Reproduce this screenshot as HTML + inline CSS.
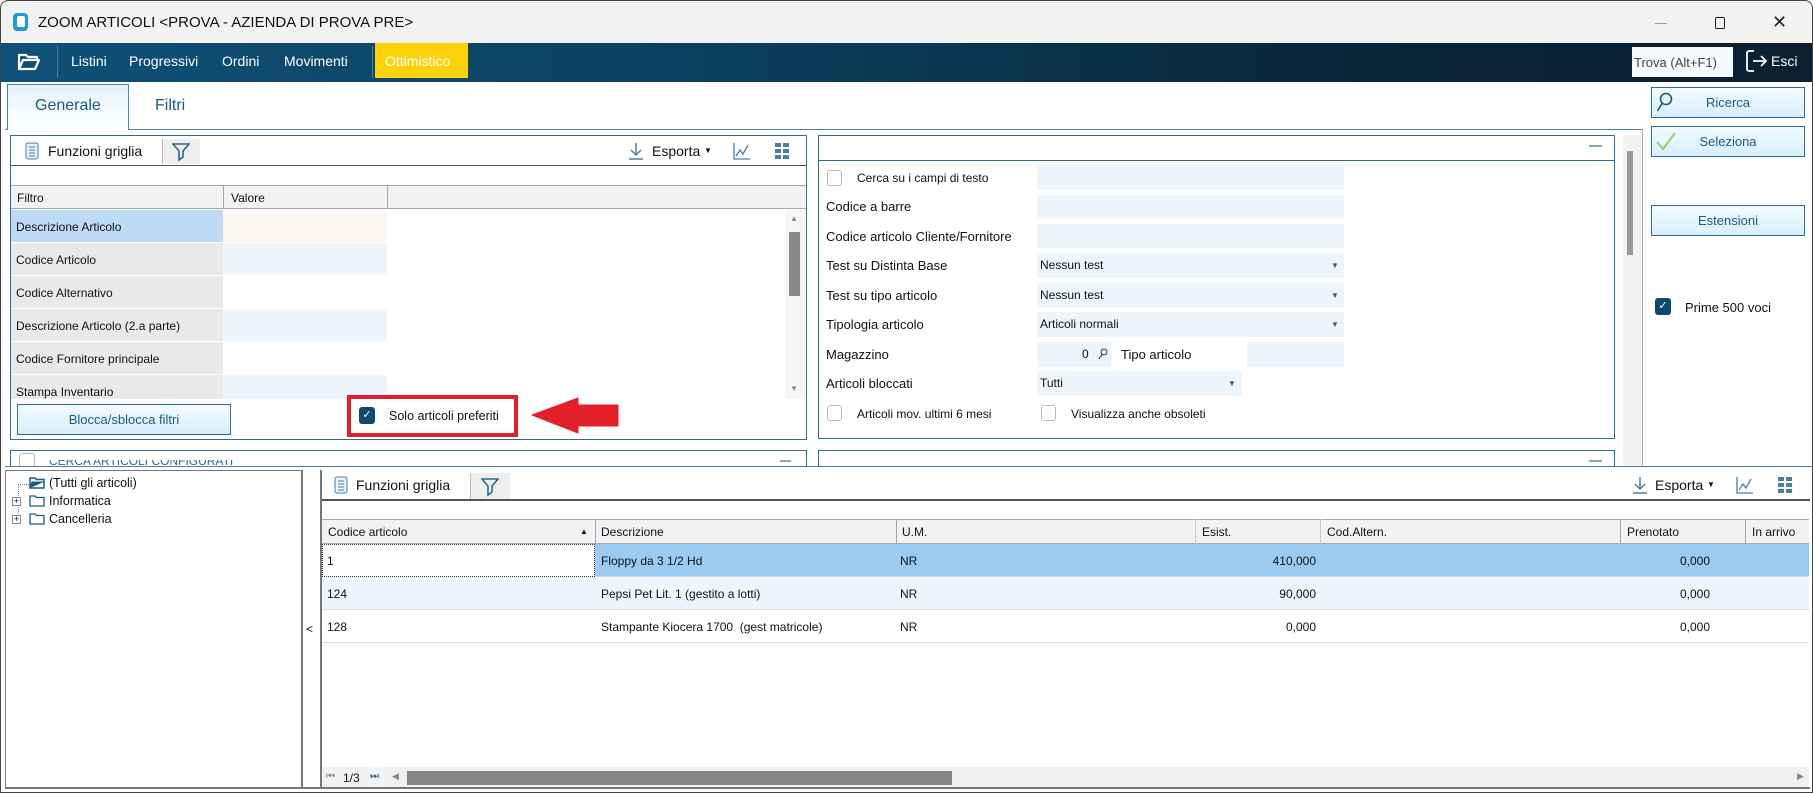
<!DOCTYPE html>
<html><head><meta charset="utf-8"><style>
*{box-sizing:border-box;margin:0;padding:0}
body{width:1813px;height:793px;background:#fff;font-family:"Liberation Sans",sans-serif;font-size:12px;color:#111;position:relative;overflow:hidden}
.a{position:absolute}
.t{position:absolute;white-space:nowrap}
.inp{position:absolute;background:#eef6fd}
.cb{position:absolute;width:15px;height:16px;border:1px solid #bbb;border-radius:3px;background:#fff}
.cbc{position:absolute;width:16px;height:17px;background:#0f4a6e;border-radius:3px;color:#fff;font-size:11px;text-align:center;line-height:17px}
.btn{position:absolute;border:1px solid #2a6a8c;background:linear-gradient(#f4fbff,#d7effc);color:#1a5a85;font-size:13px;text-align:center}
.dd{position:absolute;font-size:8px;color:#555}
.lb{position:absolute;white-space:nowrap;font-size:13px;left:826px}
</style></head><body>
<div class="a" style="left:0;top:0;width:1813px;height:793px;border:1px solid #444;border-radius:8px 8px 0 0"></div>
<div class="a" style="left:1px;top:1px;width:1811px;height:42px;background:#f3f3f3;border-radius:8px 8px 0 0"></div>
<div class="a" style="left:13px;top:13px;width:15px;height:18px;background:#1e9be0;border-radius:4px"></div>
<div class="a" style="left:17px;top:16px;width:8px;height:11px;background:#fff;border-radius:2px"></div>
<div class="t" style="left:38px;top:14px;font-size:15px;color:#111">ZOOM ARTICOLI &lt;PROVA - AZIENDA DI PROVA PRE&gt;</div>
<div class="a" style="left:1655px;top:23px;width:12px;height:1px;background:#999"></div>
<div class="a" style="left:1715px;top:17px;width:10px;height:12px;border:1.5px solid #222;border-radius:2px"></div>
<div class="t" style="left:1772px;top:12px;font-size:18px;color:#222">✕</div>
<div class="a" style="left:1px;top:43px;width:1811px;height:39px;background:linear-gradient(90deg,#0e5178 0%,#0b3f5e 40%,#0a2538 75%,#0b1f30 100%)"></div>
<svg class="a" style="left:17px;top:52px" width="24" height="20" viewBox="0 0 24 20"><path d="M2 3h7l2 2h9v3H6L2 17z M2 17l4-9h16l-4 9z" fill="none" stroke="#fff" stroke-width="2.2" stroke-linejoin="round"/></svg>
<div class="a" style="left:57px;top:46px;width:1px;height:32px;background:#5a7d95"></div>
<div class="t" style="left:71px;top:53px;font-size:14px;color:#fff">Listini</div>
<div class="t" style="left:129px;top:53px;font-size:14px;color:#fff">Progressivi</div>
<div class="t" style="left:222px;top:53px;font-size:14px;color:#fff">Ordini</div>
<div class="t" style="left:284px;top:53px;font-size:14px;color:#fff">Movimenti</div>
<div class="a" style="left:372px;top:46px;width:1px;height:32px;background:#5a7d95"></div>
<div class="a" style="left:375px;top:43px;width:93px;height:35px;background:#fdd20a"></div>
<div class="t" style="left:385px;top:53px;font-size:14px;color:#fff">Ottimistico</div>
<div class="a" style="left:1632px;top:47px;width:101px;height:30px;background:#f3f9fd"></div>
<div class="t" style="left:1634px;top:55px;font-size:13px;color:#444">Trova (Alt+F1)</div>
<svg class="a" style="left:1745px;top:48px" width="24" height="26" viewBox="0 0 24 26"><path d="M9 3H4a2 2 0 0 0-2 2v16a2 2 0 0 0 2 2h5" fill="none" stroke="#fff" stroke-width="1.8"/><path d="M8 13h13M16 8l5 5-5 5" fill="none" stroke="#fff" stroke-width="1.8"/></svg>
<div class="t" style="left:1771px;top:53px;font-size:14px;color:#fff">Esci</div>
<div class="a" style="left:5px;top:129px;width:1637px;height:1px;background:#567f99"></div>
<div class="a" style="left:1642px;top:129px;width:1px;height:337px;background:#aaa"></div>
<div class="a" style="left:7px;top:84px;width:122px;height:46px;border:1px solid #4a86ad;border-bottom:none;background:linear-gradient(#e4f2fc,#fff)"></div>
<div class="t" style="left:35px;top:97px;font-size:16px;color:#1a5a85">Generale</div>
<div class="t" style="left:155px;top:97px;font-size:16px;color:#1a5a85">Filtri</div>
<div class="a" style="left:10px;top:135px;width:797px;height:305px;border:1px solid #2d6b8f"></div>
<div class="a" style="left:11px;top:165px;width:795px;height:1px;background:#555"></div>
<svg class="a" style="left:25px;top:142px" width="14" height="18" viewBox="0 0 14 18"><rect x="1" y="1" width="12" height="16" rx="2" fill="#e8f2fa" stroke="#4a7fa5"/><path d="M4 5h6M4 8h6M4 11h6M4 14h6" stroke="#4a7fa5"/></svg>
<div class="t" style="left:48px;top:143px;font-size:14px">Funzioni griglia</div>
<div class="a" style="left:162px;top:139px;width:38px;height:25px;background:#eee;border-left:1px solid #bbb"></div>
<svg class="a" style="left:172px;top:142px" width="18" height="20" viewBox="0 0 18 20"><path d="M1 2h16l-6 7v6l-4 3V9z" fill="none" stroke="#2a6a8c" stroke-width="1.6"/></svg>
<svg class="a" style="left:628px;top:142px" width="16" height="18" viewBox="0 0 16 18"><path d="M8 1v12M3 8l5 5 5-5M1 17h14" fill="none" stroke="#4a7fa5" stroke-width="1.5"/></svg>
<div class="t" style="left:652px;top:143px;font-size:14px">Esporta</div>
<div class="t" style="left:704px;top:146px;font-size:8px">▼</div>
<svg class="a" style="left:733px;top:142px" width="18" height="18" viewBox="0 0 18 18"><path d="M1 1v16h16M3 14l4-6 3 4 5-9" fill="none" stroke="#4a7fa5" stroke-width="1.3"/></svg>
<svg class="a" style="left:775px;top:143px" width="14" height="16" viewBox="0 0 14 16"><g fill="#4a7fa5"><rect x="0" y="0" width="6" height="4"/><rect x="8" y="0" width="6" height="4"/><rect x="0" y="6" width="6" height="4"/><rect x="8" y="6" width="6" height="4"/><rect x="0" y="12" width="6" height="4"/><rect x="8" y="12" width="6" height="4"/></g></svg>
<div class="a" style="left:11px;top:185px;width:795px;height:24px;background:#f2f2f2;border-top:1px solid #9ab;border-bottom:1px solid #9ab"></div>
<div class="a" style="left:223px;top:185px;width:1px;height:24px;background:#9ab"></div>
<div class="a" style="left:387px;top:185px;width:1px;height:24px;background:#9ab"></div>
<div class="t" style="left:17px;top:191px">Filtro</div>
<div class="t" style="left:231px;top:191px">Valore</div>
<div class="a" style="left:11px;top:210px;width:212px;height:32px;background:#c0dbf5"></div>
<div class="a" style="left:223px;top:210px;width:164px;height:32px;background:#fcf8ef"></div>
<div class="a" style="left:11px;top:243px;width:212px;height:32px;background:#e9e9e9"></div>
<div class="a" style="left:223px;top:243px;width:164px;height:32px;background:#eef6fd"></div>
<div class="a" style="left:11px;top:276px;width:212px;height:32px;background:#e9e9e9"></div>
<div class="a" style="left:11px;top:309px;width:212px;height:32px;background:#e9e9e9"></div>
<div class="a" style="left:223px;top:309px;width:164px;height:32px;background:#eef6fd"></div>
<div class="a" style="left:11px;top:342px;width:212px;height:32px;background:#e9e9e9"></div>
<div class="a" style="left:11px;top:375px;width:212px;height:24px;background:#e9e9e9"></div>
<div class="a" style="left:223px;top:375px;width:164px;height:24px;background:#eef6fd"></div>
<div class="t" style="left:16px;top:220px">Descrizione Articolo</div>
<div class="t" style="left:16px;top:253px">Codice Articolo</div>
<div class="t" style="left:16px;top:286px">Codice Alternativo</div>
<div class="t" style="left:16px;top:319px">Descrizione Articolo (2.a parte)</div>
<div class="t" style="left:16px;top:352px">Codice Fornitore principale</div>
<div class="t" style="left:16px;top:385px">Stampa Inventario</div>
<div class="a" style="left:785px;top:210px;width:20px;height:189px;background:#f6f6f6"></div>
<div class="t" style="left:790px;top:214px;font-size:8px;color:#888">▲</div>
<div class="a" style="left:789px;top:232px;width:11px;height:64px;background:#888"></div>
<div class="t" style="left:790px;top:384px;font-size:8px;color:#888">▼</div>
<div class="btn" style="left:17px;top:404px;width:214px;height:31px;line-height:29px">Blocca/sblocca filtri</div>
<div class="a" style="left:347px;top:395px;width:171px;height:42px;border:4px solid #e3202a"></div>
<div class="cbc" style="left:359px;top:407px">✓</div>
<div class="t" style="left:389px;top:409px;font-size:12.5px">Solo articoli preferiti</div>
<svg class="a" style="left:530px;top:395px" width="90" height="40" viewBox="0 0 90 40"><path d="M2 20L48 3V10H88V31H48V38Z" fill="#e3202a" stroke="#e3202a" stroke-linejoin="round"/></svg>
<div class="a" style="left:10px;top:450px;width:797px;height:16px;border:1px solid #2d6b8f;border-bottom:none"></div>
<div class="a" style="left:19px;top:453px;width:16px;height:13px;border:1px solid #bbb;border-bottom:none;border-radius:3px 3px 0 0"></div>
<div class="a" style="left:11px;top:460px;width:795px;height:6px;overflow:hidden"><div class="t" style="left:38px;top:-6px;color:#2a6a8c;font-size:12px">CERCA ARTICOLI CONFIGURATI</div></div>
<div class="a" style="left:780px;top:460px;width:11px;height:2px;background:#8aa"></div>
<div class="a" style="left:818px;top:135px;width:797px;height:304px;border:1px solid #2d6b8f"></div>
<div class="a" style="left:819px;top:160px;width:795px;height:1px;background:#2d6b8f"></div>
<div class="a" style="left:1589px;top:145px;width:13px;height:2px;background:#8aa"></div>
<div class="cb" style="left:827px;top:170px"></div>
<div class="t" style="left:857px;top:171px">Cerca su i campi di testo</div>
<div class="inp" style="left:1037px;top:165px;width:307px;height:25px"></div>
<div class="lb" style="top:199px">Codice a barre</div>
<div class="inp" style="left:1037px;top:195px;width:307px;height:24px"></div>
<div class="lb" style="top:229px">Codice articolo Cliente/Fornitore</div>
<div class="inp" style="left:1037px;top:224px;width:307px;height:24px"></div>
<div class="lb" style="top:258px">Test su Distinta Base</div>
<div class="inp" style="left:1037px;top:253px;width:307px;height:25px"></div>
<div class="t" style="left:1040px;top:258px">Nessun test</div><div class="dd" style="left:1331px;top:261px">▼</div>
<div class="lb" style="top:288px">Test su tipo articolo</div>
<div class="inp" style="left:1037px;top:283px;width:307px;height:25px"></div>
<div class="t" style="left:1040px;top:288px">Nessun test</div><div class="dd" style="left:1331px;top:291px">▼</div>
<div class="lb" style="top:317px">Tipologia articolo</div>
<div class="inp" style="left:1037px;top:312px;width:307px;height:25px"></div>
<div class="t" style="left:1040px;top:317px">Articoli normali</div><div class="dd" style="left:1331px;top:320px">▼</div>
<div class="lb" style="top:347px">Magazzino</div>
<div class="inp" style="left:1037px;top:342px;width:74px;height:25px"></div>
<div class="t" style="left:1082px;top:347px">0</div>
<svg class="a" style="left:1098px;top:348px" width="10" height="12" viewBox="0 0 10 12"><circle cx="6" cy="4" r="3" fill="none" stroke="#333"/><path d="M4 6.5L1 11" stroke="#333"/></svg>
<div class="t" style="left:1121px;top:347px;font-size:13px">Tipo articolo</div>
<div class="inp" style="left:1247px;top:342px;width:97px;height:25px"></div>
<div class="lb" style="top:376px">Articoli bloccati</div>
<div class="inp" style="left:1037px;top:371px;width:205px;height:25px"></div>
<div class="t" style="left:1040px;top:376px">Tutti</div><div class="dd" style="left:1228px;top:379px">▼</div>
<div class="cb" style="left:827px;top:405px"></div>
<div class="t" style="left:857px;top:407px">Articoli mov. ultimi 6 mesi</div>
<div class="cb" style="left:1041px;top:405px"></div>
<div class="t" style="left:1071px;top:407px">Visualizza anche obsoleti</div>
<div class="a" style="left:818px;top:450px;width:797px;height:16px;border:1px solid #2d6b8f;border-bottom:none"></div>
<div class="a" style="left:1589px;top:460px;width:13px;height:2px;background:#8aa"></div>
<div class="a" style="left:1623px;top:135px;width:19px;height:331px;background:#f2f2f2"></div>
<div class="a" style="left:1627px;top:151px;width:6px;height:104px;background:#999"></div>
<div class="btn" style="left:1651px;top:87px;width:154px;height:31px;line-height:29px">Ricerca</div>
<svg class="a" style="left:1656px;top:92px" width="18" height="22" viewBox="0 0 18 22"><circle cx="10" cy="7" r="5.5" fill="none" stroke="#1a5a85" stroke-width="1.6"/><path d="M6 11.5L1.5 19" stroke="#1a5a85" stroke-width="1.6"/></svg>
<div class="btn" style="left:1651px;top:126px;width:154px;height:31px;line-height:29px">Seleziona</div>
<svg class="a" style="left:1655px;top:131px" width="22" height="20" viewBox="0 0 22 20"><path d="M2 11l6 7L20 2" fill="none" stroke="#8bd46a" stroke-width="2"/></svg>
<div class="btn" style="left:1651px;top:205px;width:154px;height:31px;line-height:29px">Estensioni</div>
<div class="cbc" style="left:1655px;top:298px">✓</div>
<div class="t" style="left:1685px;top:300px;font-size:13px">Prime 500 voci</div>
<div class="a" style="left:5px;top:466px;width:1808px;height:1px;background:#567f99"></div>
<div class="a" style="left:5px;top:470px;width:1px;height:318px;background:#777"></div>
<div class="a" style="left:5px;top:787px;width:1805px;height:2px;background:#777"></div>
<div class="a" style="left:5px;top:470px;width:296px;height:1px;background:#777"></div>
<div class="a" style="left:301px;top:470px;width:2px;height:318px;background:#777"></div>
<div class="a" style="left:320px;top:470px;width:2px;height:318px;background:#777"></div>
<div class="t" style="left:306px;top:622px;font-size:12px">&lt;</div>
<div class="a" style="left:18px;top:484px;width:1px;height:38px;border-left:1px dotted #888"></div>
<div class="a" style="left:18px;top:484px;width:11px;border-top:1px dotted #888"></div>
<svg class="a" style="left:29px;top:476px" width="16" height="13" viewBox="0 0 16 13"><path d="M1 2h5l1.5 1.5H15V12H1z" fill="none" stroke="#1a5a85" stroke-width="1.5"/><path d="M1 12l2-6h12" fill="#1a5a85" stroke="#1a5a85"/></svg>
<div class="t" style="left:49px;top:476px;font-size:12.5px">(Tutti gli articoli)</div>
<div class="a" style="left:12px;top:497px;width:9px;height:9px;border:1px solid #888;font-size:9px;line-height:7px;text-align:center;background:#fff">+</div>
<div class="a" style="left:12px;top:515px;width:9px;height:9px;border:1px solid #888;font-size:9px;line-height:7px;text-align:center;background:#fff">+</div>
<svg class="a" style="left:29px;top:494px" width="16" height="13" viewBox="0 0 16 13"><path d="M1 2h5l1.5 1.5H15V12H1z" fill="none" stroke="#1a5a85" stroke-width="1.3"/></svg>
<svg class="a" style="left:29px;top:512px" width="16" height="13" viewBox="0 0 16 13"><path d="M1 2h5l1.5 1.5H15V12H1z" fill="none" stroke="#1a5a85" stroke-width="1.3"/></svg>
<div class="t" style="left:49px;top:494px;font-size:12.5px">Informatica</div>
<div class="t" style="left:49px;top:512px;font-size:12.5px">Cancelleria</div>
<div class="a" style="left:322px;top:499px;width:1488px;height:2px;background:#555"></div>
<svg class="a" style="left:334px;top:476px" width="14" height="18" viewBox="0 0 14 18"><rect x="1" y="1" width="12" height="16" rx="2" fill="#e8f2fa" stroke="#4a7fa5"/><path d="M4 5h6M4 8h6M4 11h6M4 14h6" stroke="#4a7fa5"/></svg>
<div class="t" style="left:356px;top:477px;font-size:14px">Funzioni griglia</div>
<div class="a" style="left:470px;top:473px;width:40px;height:26px;background:#eee;border-left:1px solid #bbb"></div>
<svg class="a" style="left:481px;top:477px" width="18" height="20" viewBox="0 0 18 20"><path d="M1 2h16l-6 7v6l-4 3V9z" fill="none" stroke="#2a6a8c" stroke-width="1.6"/></svg>
<svg class="a" style="left:1632px;top:476px" width="16" height="18" viewBox="0 0 16 18"><path d="M8 1v12M3 8l5 5 5-5M1 17h14" fill="none" stroke="#4a7fa5" stroke-width="1.5"/></svg>
<div class="t" style="left:1655px;top:477px;font-size:14px">Esporta</div>
<div class="t" style="left:1707px;top:480px;font-size:8px">▼</div>
<svg class="a" style="left:1736px;top:476px" width="18" height="18" viewBox="0 0 18 18"><path d="M1 1v16h16M3 14l4-6 3 4 5-9" fill="none" stroke="#4a7fa5" stroke-width="1.3"/></svg>
<svg class="a" style="left:1778px;top:477px" width="14" height="16" viewBox="0 0 14 16"><g fill="#4a7fa5"><rect x="0" y="0" width="6" height="4"/><rect x="8" y="0" width="6" height="4"/><rect x="0" y="6" width="6" height="4"/><rect x="8" y="6" width="6" height="4"/><rect x="0" y="12" width="6" height="4"/><rect x="8" y="12" width="6" height="4"/></g></svg>
<div class="a" style="left:322px;top:519px;width:1487px;height:25px;background:#f2f2f2;border-top:1px solid #9ab;border-bottom:1px solid #9ab"></div>
<div class="a" style="left:595px;top:519px;width:1px;height:25px;background:#9ab"></div>
<div class="a" style="left:896px;top:519px;width:1px;height:25px;background:#9ab"></div>
<div class="a" style="left:1195px;top:519px;width:1px;height:25px;background:#ccc"></div>
<div class="a" style="left:1320px;top:519px;width:1px;height:25px;background:#ccc"></div>
<div class="a" style="left:1620px;top:519px;width:1px;height:25px;background:#9ab"></div>
<div class="a" style="left:1745px;top:519px;width:1px;height:25px;background:#9ab"></div>
<div class="t" style="left:328px;top:525px">Codice articolo</div>
<div class="t" style="left:580px;top:527px;font-size:8px">▲</div>
<div class="t" style="left:601px;top:525px">Descrizione</div>
<div class="t" style="left:902px;top:525px">U.M.</div>
<div class="t" style="left:1202px;top:525px">Esist.</div>
<div class="t" style="left:1327px;top:525px">Cod.Altern.</div>
<div class="t" style="left:1627px;top:525px">Prenotato</div>
<div class="t" style="left:1752px;top:525px">In arrivo</div>
<div class="a" style="left:322px;top:544px;width:1487px;height:33px;background:#9ccbf1;border-bottom:1px solid #ddd"></div>
<div class="a" style="left:322px;top:544px;width:273px;height:33px;background:#fff;border:1px dotted #333"></div>
<div class="a" style="left:322px;top:577px;width:1487px;height:33px;background:#eef6fd;border-bottom:1px solid #ddd"></div>
<div class="a" style="left:322px;top:610px;width:1487px;height:33px;background:#fff;border-bottom:1px solid #ddd"></div>
<div class="t" style="left:327px;top:554px">1</div>
<div class="t" style="left:601px;top:554px">Floppy da 3 1/2 Hd</div>
<div class="t" style="left:900px;top:554px">NR</div>
<div class="t" style="left:1316px;top:554px;transform:translateX(-100%)">410,000</div>
<div class="t" style="left:1710px;top:554px;transform:translateX(-100%)">0,000</div>
<div class="t" style="left:327px;top:587px">124</div>
<div class="t" style="left:601px;top:587px">Pepsi Pet Lit. 1 (gestito a lotti)</div>
<div class="t" style="left:900px;top:587px">NR</div>
<div class="t" style="left:1316px;top:587px;transform:translateX(-100%)">90,000</div>
<div class="t" style="left:1710px;top:587px;transform:translateX(-100%)">0,000</div>
<div class="t" style="left:327px;top:620px">128</div>
<div class="t" style="left:601px;top:620px">Stampante Kiocera 1700&nbsp; (gest matricole)</div>
<div class="t" style="left:900px;top:620px">NR</div>
<div class="t" style="left:1316px;top:620px;transform:translateX(-100%)">0,000</div>
<div class="t" style="left:1710px;top:620px;transform:translateX(-100%)">0,000</div>
<div class="a" style="left:322px;top:767px;width:1487px;height:20px;background:#f0f0f0"></div>
<div class="t" style="left:326px;top:771px;font-size:10px;color:#888">⏮</div>
<div class="t" style="left:343px;top:771px;font-size:12px">1/3</div>
<div class="a" style="left:368px;top:767px;width:16px;height:20px;background:#eef6fd"></div>
<div class="t" style="left:370px;top:771px;font-size:10px;color:#555">⏭</div>
<div class="t" style="left:392px;top:771px;font-size:9px;color:#888">◀</div>
<div class="a" style="left:407px;top:771px;width:545px;height:14px;background:#858585"></div>
<div class="t" style="left:1797px;top:771px;font-size:9px;color:#888">▶</div>
</body></html>
